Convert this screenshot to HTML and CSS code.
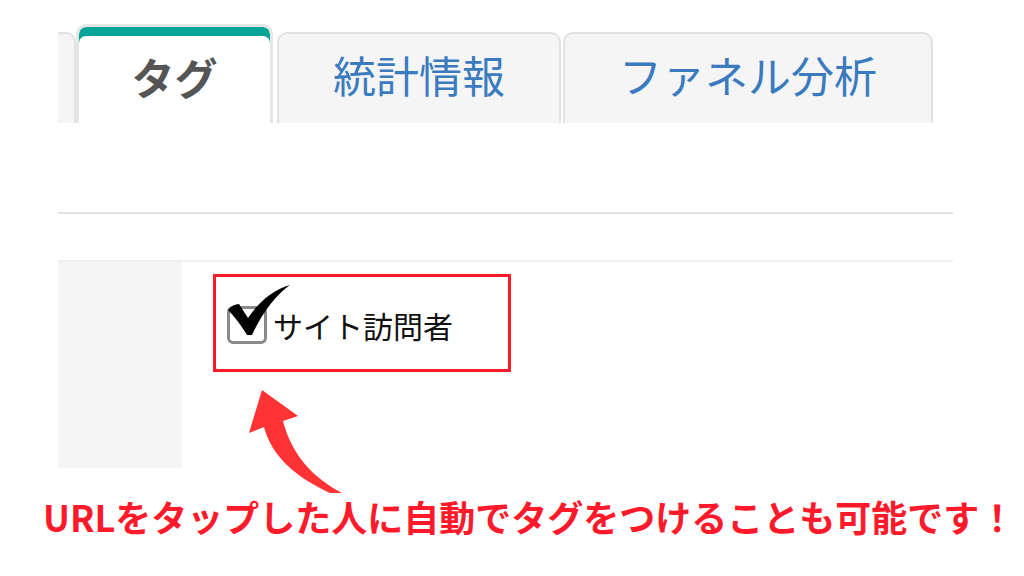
FILE: index.html
```html
<!DOCTYPE html>
<html lang="ja">
<head>
    <meta charset="UTF-8">
    <meta name="viewport" content="width=device-width, initial-scale=1.0">
    <title>タグ設定</title>
    <link rel="stylesheet" href="styles.css">
</head>
<body>
    <div class="page">
        <div class="tabs">
            <div class="tab tab-cut"></div>
            <div class="tab tab-active">タグ</div>
            <div class="tab tab-stats">統計情報</div>
            <div class="tab tab-funnel">ファネル分析</div>
        </div>

        <div class="divider"></div>
        <div class="divider divider-light"></div>

        <div class="tag-row">
            <div class="tag-label"></div>
            <div class="tag-cell">
                <div class="highlight">
                    <label class="tag-option">
                        <span class="checkbox">
                            <svg class="checkmark" viewBox="0 0 64 56" width="64" height="56">
                                <path d="M1 27 C4 23 8 21 12 21 L21 35 C31 20 45 7 63 2 C49 12 35 30 25 52 L20 52 C14 42 7 33 1 27 Z" fill="#000"/>
                            </svg>
                        </span>
                        <span class="tag-name">サイト訪問者</span>
                    </label>
                </div>
            </div>
        </div>

        <svg class="arrow" viewBox="0 0 110 115" width="110" height="115">
            <path d="M22 5 L58 31 L43 36 C52 70 72 92 102 108 L90 108 C56 92 32 72 24 42 L9 48 Z" fill="#ff3333"/>
        </svg>

        <p class="caption">URLをタップした人に自動でタグをつけることも可能です！</p>
    </div>
</body>
</html>
```

FILE: styles.css
```css
body {
    margin: 0;
    background-color: #fff;
    font-family: "Noto Sans CJK JP", "Noto Sans", sans-serif;
}

.page {
    position: relative;
    width: 895px;
    padding: 24px 0 0 58px;
}

.tabs {
    display: flex;
    align-items: flex-end;
    height: 99px;
    overflow: hidden;
}

.tab {
    box-sizing: border-box;
    height: 91px;
    display: flex;
    justify-content: center;
    align-items: center;
    background-color: #f5f5f5;
    border: 2px solid #e2e2e2;
    border-bottom: none;
    border-radius: 10px 10px 0 0;
    color: #3a7bbf;
    font-size: 43px;
    line-height: 1;
    padding-bottom: 9px;
}

.tab-cut {
    width: 120px;
    margin-left: -102px;
}

.tab-active {
    width: 197px;
    height: 99px;
    margin-left: 0;
    background-color: #fff;
    border: 3px solid #e6e6e6;
    border-bottom: none;
    box-shadow: inset 0 9px 0 #06a597;
    color: #555;
    font-weight: bold;
    padding: 2px 0 0;
}

.tab-stats {
    width: 284px;
    margin-left: 4px;
}

.tab-funnel {
    width: 370px;
    margin-left: 2px;
}

.divider {
    height: 2px;
    background-color: #e3e3e3;
    margin-top: 89px;
}

.divider-light {
    background-color: #efefef;
    margin-top: 46px;
}

.tag-row {
    display: flex;
    height: 206px;
}

.tag-label {
    width: 124px;
    background-color: #f5f5f5;
}

.tag-cell {
    padding: 12px 0 0 31px;
}

.highlight {
    box-sizing: border-box;
    width: 298px;
    height: 98px;
    border: 3px solid #ff1a2a;
    display: flex;
    align-items: center;
    padding: 4px 0 0 11px;
}

.tag-option {
    display: flex;
    align-items: center;
}

.checkbox {
    position: relative;
    box-sizing: border-box;
    width: 40px;
    height: 38px;
    border: 3px solid #8a8a8a;
    border-radius: 6px;
}

.checkmark {
    position: absolute;
    left: -3px;
    top: -26px;
}

.tag-name {
    margin-left: 6px;
    font-size: 30px;
    color: #111;
}

.arrow {
    position: absolute;
    left: 240px;
    top: 385px;
}

.caption {
    margin: 23px 0 0 -15px;
    width: 962px;
    color: #fe1a2a;
    font-size: 36px;
    font-weight: bold;
    line-height: 1.4;
    white-space: nowrap;
}
```
